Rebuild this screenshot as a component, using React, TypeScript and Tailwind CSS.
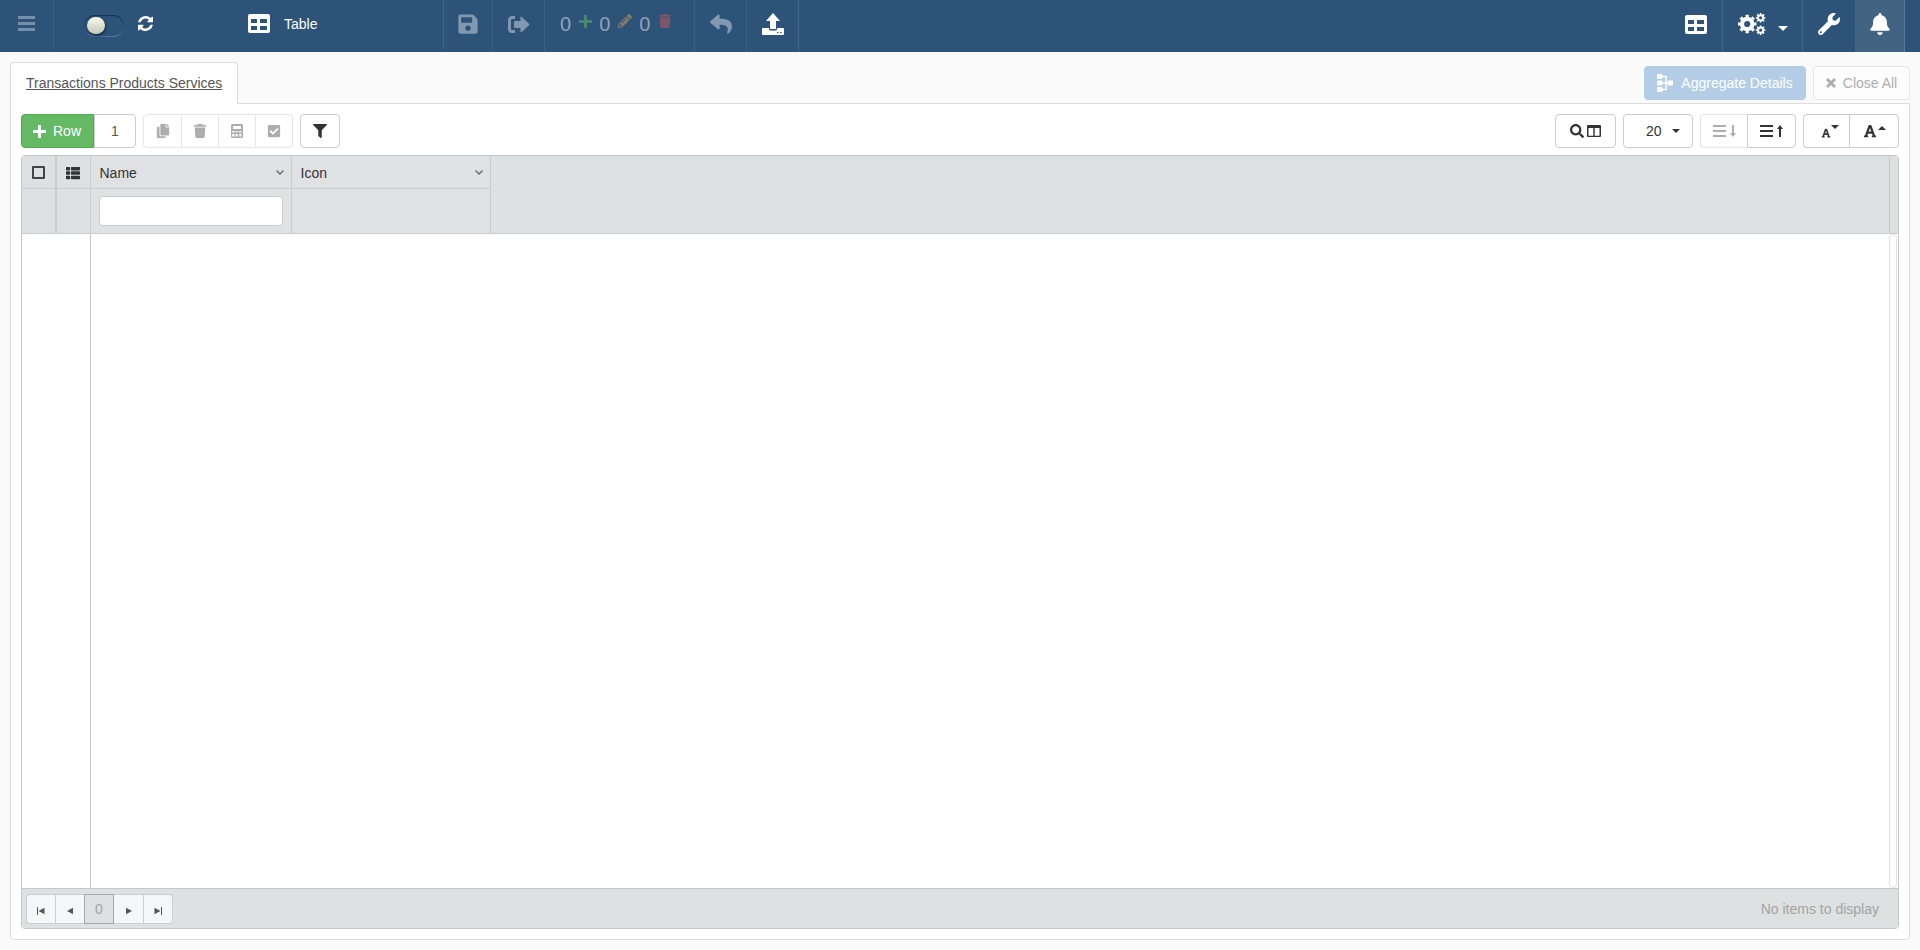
import { type ReactNode } from "react";
import {
  FaBell,
  FaCheckSquare,
  FaCopy,
  FaFilter,
  FaFont,
  FaPencilAlt,
  FaReply,
  FaSave,
  FaSearch,
  FaThList,
  FaWrench,
} from "react-icons/fa";
import { FaTrash } from "react-icons/fa6";

function TableIcon({ className }: { className?: string }) {
  return (
    <svg viewBox="0 0 22 19" className={className} fill="currentColor" aria-hidden="true">
      <path
        fillRule="evenodd"
        d="M2 0h18a2 2 0 0 1 2 2v15a2 2 0 0 1-2 2H2a2 2 0 0 1-2-2V2a2 2 0 0 1 2-2ZM3 5v4h6V5Zm9 0v4h7V5ZM3 12v4h6v-4Zm9 0v4h7v-4Z"
      />
    </svg>
  );
}

function RefreshIcon({ className }: { className?: string }) {
  return (
    <svg viewBox="0 0 1536 1536" className={className} fill="currentColor" aria-hidden="true">
      <path d="M1511 928q0 5-1 7-64 268-268 434.500T764 1536q-146 0-282.500-55T238 1324l-129 129q-19 19-45 19t-45-19-19-45V960q0-26 19-45t45-19h448q26 0 45 19t19 45-19 45l-137 137q71 66 161 102t187 36q134 0 250-65t186-179q11-17 53-117 8-23 30-23h192q13 0 22.500 9.500t9.500 22.500zm25-800v448q0 26-19 45t-45 19h-448q-26 0-45-19t-19-45 19-45l138-138Q969 256 768 256q-134 0-250 65T332 500q-11 17-53 117-8 23-30 23H50q-13 0-22.500-9.500T18 608v-7q65-268 270-434.500T768 0q146 0 284 55.500T1297 212l130-129q19-19 45-19t45 19 19 45z" />
    </svg>
  );
}

function ExitIcon({ className }: { className?: string }) {
  return (
    <svg viewBox="0 0 22 17" className={className} aria-hidden="true">
      <path d="M7 1.500H4a2.500 2.500 0 0 0-2.500 2.500v9A2.500 2.500 0 0 0 4 15.500h3" fill="none" stroke="currentColor" strokeWidth="3" />
      <path d="M13.500.8 21 7.800q.7.700 0 1.400l-7.500 7q-1 .6-1-.6V12H7.200Q6 12 6 10.800V6.200Q6 5 7.200 5h5.300V1.400q0-1.200 1-.6Z" fill="currentColor" />
    </svg>
  );
}

function UploadIcon({ className }: { className?: string }) {
  return (
    <svg viewBox="0 0 22 22" className={className} fill="currentColor" aria-hidden="true">
      <path d="M11 0 18 8h-4v7.500q0 .5-.5.500h-5q-.5 0-.5-.5V8H4Z" />
      <path
        fillRule="evenodd"
        d="M1 15h6v1q0 1.500 1.500 1.500h5q1.500 0 1.500-1.500v-1h6q1 0 1 1v5q0 1-1 1H1q-1 0-1-1v-5q0-1 1-1ZM15 19v1h1.500v-1Zm3 0v1h1.500v-1Z"
      />
    </svg>
  );
}

function Gear({ x, y, ring, width, teeth, reach }: { x: number; y: number; ring: number; width: number; teeth: number; reach: number }) {
  return (
    <g fill="none" stroke="currentColor">
      <circle cx={x} cy={y} r={ring} strokeWidth={width} />
      <circle
        cx={x}
        cy={y}
        r={ring + width / 2 + reach / 2 - 0.2}
        strokeWidth={reach + 0.4}
        pathLength={teeth * 2}
        strokeDasharray="1 1"
        strokeDashoffset="0.5"
      />
    </g>
  );
}

function GearsIcon({ className }: { className?: string }) {
  return (
    <svg viewBox="0 0 28 22" className={className} aria-hidden="true">
      <Gear x={9.2} y={11} ring={5.2} width={4.2} teeth={8} reach={2} />
      <Gear x={22.6} y={4.8} ring={2.6} width={2} teeth={8} reach={1.2} />
      <Gear x={22.6} y={17.2} ring={2.6} width={2} teeth={8} reach={1.2} />
    </svg>
  );
}

function PlusIcon({ className }: { className?: string }) {
  return (
    <svg viewBox="0 0 13 13" className={className} fill="none" stroke="currentColor" strokeWidth="3" aria-hidden="true">
      <path d="M6.500 0v13M0 6.500h13" />
    </svg>
  );
}

function CrossIcon({ className }: { className?: string }) {
  return (
    <svg viewBox="0 0 10 10" className={className} fill="none" stroke="currentColor" strokeWidth="2.800" aria-hidden="true">
      <path d="m1 1 8 8M9 1 1 9" />
    </svg>
  );
}

function HierarchyIcon({ className }: { className?: string }) {
  return (
    <svg viewBox="0 0 16 18" className={className} aria-hidden="true">
      <path d="M4 2.500h5v13H4M4 9h8" fill="none" stroke="currentColor" strokeWidth="1.500" />
      <path d="M1 0h3.500q1 0 1 1v3q0 1-1 1H1Q0 5 0 4V1q0-1 1-1Zm0 6.500h3.500q1 0 1 1v3q0 1-1 1H1q-1 0-1-1v-3q0-1 1-1ZM1 13h3.500q1 0 1 1v3q0 1-1 1H1q-1 0-1-1v-3q0-1 1-1ZM11.500 6.500H15q1 0 1 1v3q0 1-1 1h-3.500q-1 0-1-1v-3q0-1 1-1Z" fill="currentColor" />
    </svg>
  );
}

function CalculatorIcon({ className }: { className?: string }) {
  return (
    <svg viewBox="0 0 12 14" className={className} aria-hidden="true">
      <path
        fill="currentColor"
        fillRule="evenodd"
        d="M1.500 0h9A1.500 1.500 0 0 1 12 1.500v11a1.500 1.500 0 0 1-1.500 1.500h-9A1.500 1.500 0 0 1 0 12.500v-11A1.500 1.500 0 0 1 1.500 0ZM2 2v3h8V2ZM1.200 7v1.500h2.300V7Zm3.500 0v1.500h2V7Zm3.300 0v1.500h2.500V7ZM1.200 10v2.500h2.300V10Zm3.500 0v2.500h2V10Zm3.600 0v2.500h2V10Z"
      />
    </svg>
  );
}

function ColumnsIcon({ className }: { className?: string }) {
  return (
    <svg viewBox="0 0 14 12" className={className} aria-hidden="true">
      <path
        fill="currentColor"
        fillRule="evenodd"
        d="M1 0h12a1 1 0 0 1 1 1v10a1 1 0 0 1-1 1H1a1 1 0 0 1-1-1V1a1 1 0 0 1 1-1ZM1.500 3v7.700h4.800V3Zm6.200 0v7.700h4.800V3Z"
      />
    </svg>
  );
}

function LinesIcon({ className }: { className?: string }) {
  return (
    <svg viewBox="0 0 13 12" className={className} fill="none" stroke="currentColor" strokeWidth="2" aria-hidden="true">
      <path d="M0 1h13M0 6h13M0 11h13" />
    </svg>
  );
}

function ThinArrowIcon({ className }: { className?: string }) {
  return (
    <svg viewBox="0 0 6 12" className={className} fill="currentColor" aria-hidden="true">
      <path d="M3 0 6 4H4v8H2V4H0Z" />
    </svg>
  );
}

function TriangleIcon({ className }: { className?: string }) {
  return (
    <svg viewBox="0 0 8 4" className={className} fill="currentColor" aria-hidden="true">
      <path d="M0 0h8L4 4Z" />
    </svg>
  );
}

function Chevron() {
  return (
    <svg viewBox="0 0 8 5" className="h-[5px] w-2" fill="none" stroke="#666" strokeWidth="1.300" aria-hidden="true">
      <path d="m.5.500 3.500 3.500L7.500.500" />
    </svg>
  );
}

function BarButton({ label, className, children }: { label: string; className: string; children: ReactNode }) {
  return (
    <button type="button" aria-label={label} className={`flex h-[52px] shrink-0 items-center justify-center pb-1 ${className}`}>
      {children}
    </button>
  );
}

function TopBar() {
  return (
    <header className="flex h-[52px] items-start bg-[#2d5378] pr-[15px] text-white">
      <button type="button" aria-label="Menu" className="flex h-[49px] w-[54px] shrink-0 items-center justify-center border-r border-[#3a5f85] pb-[2px] text-[#7790aa]">
        <svg viewBox="0 0 17 15" className="h-[15px] w-[17px]" fill="none" stroke="currentColor" strokeWidth="3" aria-hidden="true">
          <path d="M0 1.500h17M0 7.500h17M0 13.500h17" />
        </svg>
      </button>
      <div className="flex h-[49px] w-[390px] shrink-0 items-center border-r border-[#43658a] pb-2 pl-[30px]">
        <button
          type="button"
          role="switch"
          aria-checked="false"
          aria-label="Auto refresh"
          className="mt-[10px] flex h-[22px] w-10 items-center rounded-full border-b border-[#54759a] pl-[3px] shadow-[inset_0_1px_1px_#152f4b]"
        >
          <span className="h-[17px] w-[18px] rounded-full bg-linear-to-b from-[#f8f8ec] to-[#c5cab8] shadow-[1px_2px_3px_#17314c]" />
        </button>
        <button type="button" aria-label="Refresh" className="ml-[14px] mt-[6px]">
          <RefreshIcon className="size-[15px]" />
        </button>
        <div className="ml-[95px] mt-[6px] flex items-center gap-[14px]">
          <TableIcon className="h-[19px] w-[22px]" />
          <h1 className="text-sm">Table</h1>
        </div>
      </div>
      <BarButton label="Save" className="w-[49px] border-r border-[#3a5f85] text-[#8198b0]">
        <FaSave className="size-[22px]" />
      </BarButton>
      <BarButton label="Save and exit" className="w-[52px] border-r border-[#3a5f85] text-[#8198b0]">
        <ExitIcon className="h-[17px] w-[22px]" />
      </BarButton>
      <div className="flex h-[52px] w-[150px] shrink-0 items-center border-r border-[#3a5f85] pb-1 pl-[15px] text-xl text-[#8ea3b8]">
        <span>0</span>
        <PlusIcon className="mb-[6px] ml-2 size-[13px] text-[#468670]" />
        <span className="ml-[7px]">0</span>
        <FaPencilAlt className="mb-[6px] ml-2 size-[14px] text-[#857a66]" />
        <span className="ml-[7px]">0</span>
        <FaTrash className="mb-[6px] ml-2 size-[14px] text-[#7d5468]" />
      </div>
      <BarButton label="Undo" className="w-[52px] border-r border-[#3a5f85] text-[#8198b0]">
        <FaReply className="size-[22px]" />
      </BarButton>
      <BarButton label="Upload" className="w-[52px] border-r border-[#43658a]">
        <UploadIcon className="size-[22px]" />
      </BarButton>
      <div className="flex-1" />
      <BarButton label="Tables" className="w-[53px] border-r border-[#43658a]">
        <TableIcon className="h-[19px] w-[22px]" />
      </BarButton>
      <BarButton label="Settings" className="w-20 gap-3 border-r border-[#43658a]">
        <GearsIcon className="h-[22px] w-7" />
        <TriangleIcon className="mt-2 h-[5px] w-[10px]" />
      </BarButton>
      <BarButton label="Tools" className="w-[52px]">
        <FaWrench className="size-[22px]" />
      </BarButton>
      <BarButton label="Notifications" className="w-[50px] border-r border-[#5b7a98] bg-[#436383]">
        <FaBell className="size-[22px]" />
      </BarButton>
    </header>
  );
}

const control = "flex h-[34px] items-center justify-center border";

function Toolbar() {
  return (
    <div className="flex justify-between">
      <div className="flex gap-[7px]">
        <div className="flex">
          <button type="button" className={`${control} w-[73px] gap-[7px] rounded-l border-[#4cae4c] bg-[#65b965] pr-px text-white`}>
            <PlusIcon className="size-[13px]" />
            Row
          </button>
          <input
            type="text"
            aria-label="Number of rows"
            defaultValue="1"
            className="h-[34px] w-[42px] rounded-r border border-[#ccc] bg-white text-center text-[#555] outline-none"
          />
        </div>
        <div className="flex text-[#adadad]">
          <button type="button" aria-label="Copy" disabled className={`${control} w-[39px] rounded-l border-[#e6e6e6]`}>
            <FaCopy className="size-[14px]" />
          </button>
          <button type="button" aria-label="Delete" disabled className={`${control} w-[37px] border-l-0 border-[#e6e6e6]`}>
            <FaTrash className="size-[14px]" />
          </button>
          <button type="button" aria-label="Calculate" disabled className={`${control} w-[37px] border-l-0 border-[#e6e6e6]`}>
            <CalculatorIcon className="h-[14px] w-3" />
          </button>
          <button type="button" aria-label="Validate" disabled className={`${control} w-[37px] rounded-r border-l-0 border-[#e6e6e6]`}>
            <FaCheckSquare className="size-[14px]" />
          </button>
        </div>
        <button type="button" aria-label="Filter" className={`${control} w-10 rounded border-[#ccc]`}>
          <FaFilter className="size-[14px]" />
        </button>
      </div>
      <div className="flex gap-[7px]">
        <button type="button" aria-label="Find column" className={`${control} w-[61px] gap-[3px] rounded border-[#ccc]`}>
          <FaSearch className="size-[14px]" />
          <ColumnsIcon className="h-3 w-[14px]" />
        </button>
        <div className="relative flex items-center">
          <select aria-label="Page size" defaultValue="20" className="h-[34px] w-[70px] appearance-none rounded border border-[#ccc] bg-white pl-[22px] outline-none">
            <option>20</option>
            <option>50</option>
            <option>100</option>
          </select>
          <TriangleIcon className="pointer-events-none absolute right-[13px] h-1 w-2" />
        </div>
        <div className="flex">
          <button type="button" aria-label="Collapse rows" disabled className={`${control} w-[47px] gap-1 rounded-l border-r-0 border-[#e6e6e6] text-[#adadad]`}>
            <LinesIcon className="h-3 w-[13px]" />
            <ThinArrowIcon className="h-3 w-[6px] rotate-180" />
          </button>
          <button type="button" aria-label="Expand rows" className={`${control} w-[49px] gap-1 rounded-r border-[#ccc]`}>
            <LinesIcon className="h-3 w-[13px]" />
            <ThinArrowIcon className="h-3 w-[6px]" />
          </button>
        </div>
        <div className="flex">
          <button type="button" aria-label="Smaller text" className={`${control} w-[46px] rounded-l border-r-0 border-[#ccc] pl-[6px]`}>
            <FaFont className="mt-1 size-[10px]" />
            <TriangleIcon className="mb-2 h-1 w-2" />
          </button>
          <button type="button" aria-label="Larger text" className={`${control} w-[50px] gap-px rounded-r border-[#ccc]`}>
            <FaFont className="size-[14px]" />
            <TriangleIcon className="mb-[6px] h-1 w-2 rotate-180" />
          </button>
        </div>
      </div>
    </div>
  );
}

const pagerButton = "flex h-[30px] items-center justify-center border border-[#ccced0] bg-[#f5f6f8]";

function Grid() {
  return (
    <section className="mt-[7px] flex flex-1 flex-col overflow-hidden rounded border border-[#c5c8c8]">
      <div className="flex bg-[#dde1e2]">
        <table className="table-fixed border-collapse text-left">
          <colgroup>
            <col className="w-[34px]" />
            <col className="w-[34px]" />
            <col className="w-[201px]" />
            <col className="w-[199px]" />
          </colgroup>
          <thead>
            <tr className="h-8 border-b border-[#c9cccc]">
              <th className="border-r-2 border-[#c9cccc] p-0">
                <input type="checkbox" aria-label="Select all" className="mx-auto mt-[2px] block size-[13px] appearance-none rounded-[1px] border-2 border-[#444] bg-transparent" />
              </th>
              <th className="border-r border-[#c9cccc] p-0">
                <FaThList className="mx-auto mt-[2px] size-[14px]" />
              </th>
              {["Name", "Icon"].map((name) => (
                <th key={name} scope="col" className="border-r border-[#c9cccc] bg-[#e0e1e3] p-0 font-normal">
                  <div className="flex items-center justify-between pl-[9px] pr-[7px] pt-[2px]">
                    {name}
                    <Chevron />
                  </div>
                </th>
              ))}
            </tr>
            <tr className="h-[45px] border-b border-[#c9cccc]">
              <td className="border-r-2 border-[#c9cccc]" />
              <td className="border-r border-[#c9cccc]" />
              <td className="border-r border-[#c9cccc] bg-[#e0e1e3] px-2 py-0">
                <input type="text" aria-label="Filter by name" className="block h-[30px] w-full rounded border border-[#ccc] bg-white px-2 outline-none" />
              </td>
              <td className="border-r border-[#c9cccc] bg-[#e0e1e3]" />
            </tr>
          </thead>
        </table>
        <div className="flex-1 border-b border-[#c9cccc]" />
        <div className="w-[9px] border-b border-l border-[#c9cccc]" />
      </div>
      <div className="flex flex-1">
        <div className="w-[69px] border-r border-[#c5c8c8]" />
        <div className="flex-1" />
        <div className="mr-px w-2 rounded border border-[#e2e2e2]" />
      </div>
      <footer className="flex h-10 items-center justify-between border-t border-[#c5c8c8] bg-[#dde1e2] pl-1 pr-[19px]">
        <nav aria-label="Pages" className="flex text-[#555]">
          <button type="button" aria-label="First page" className={`${pagerButton} w-[29px] rounded-l border-r-0`}>
            <svg viewBox="0 0 8 8" className="mt-1 size-2" fill="currentColor" aria-hidden="true">
              <path d="M0 0h1v8H0ZM7.500.700v6.600L1.500 4Z" />
            </svg>
          </button>
          <button type="button" aria-label="Previous page" className={`${pagerButton} w-[29px] border-r-0`}>
            <svg viewBox="0 0 8 8" className="mt-1 size-2" fill="currentColor" aria-hidden="true">
              <path d="M7 .7v6.600L1 4Z" />
            </svg>
          </button>
          <button type="button" aria-current="page" className="h-[30px] w-[30px] border border-[#a5a8a9] bg-[#dde1e2] text-[#a3a3a3]">
            0
          </button>
          <button type="button" aria-label="Next page" className={`${pagerButton} w-[30px] border-l-0`}>
            <svg viewBox="0 0 8 8" className="mt-1 size-2" fill="currentColor" aria-hidden="true">
              <path d="M1 .7v6.600L7 4Z" />
            </svg>
          </button>
          <button type="button" aria-label="Last page" className={`${pagerButton} w-[29px] rounded-r border-l-0`}>
            <svg viewBox="0 0 8 8" className="mt-1 size-2" fill="currentColor" aria-hidden="true">
              <path d="M7 0h1v8H7ZM.5.700v6.600l6-3.300Z" />
            </svg>
          </button>
        </nav>
        <p className="text-[#a3a3a3]">No items to display</p>
      </footer>
    </section>
  );
}

export default function App() {
  return (
    <div className="flex min-h-screen flex-col bg-[#fafafa] font-['Liberation_Sans',Arial,sans-serif] text-sm leading-5 text-[#333]">
      <TopBar />
      <main className="flex flex-1 flex-col p-[10px]">
        <div className="flex items-end justify-between">
          <a href="#transactions" className="z-10 -mb-px flex h-[42px] items-center rounded-t border border-b-0 border-[#ddd] bg-white px-[15px] pb-[2px] text-[#555] underline">
            Transactions Products Services
          </a>
          <div className="mb-[3px] flex gap-[7px]">
            <button type="button" disabled className="flex h-[34px] w-[162px] items-center justify-center gap-2 rounded border border-[#aecae4] bg-[#b3cde6] text-white">
              <HierarchyIcon className="h-[18px] w-4" />
              Aggregate Details
            </button>
            <button type="button" disabled className="flex h-[34px] w-[97px] items-center justify-center gap-[7px] rounded border border-[#e6e6e6] bg-[#fdfdfd] text-[#adadad]">
              <CrossIcon className="size-[10px]" />
              Close All
            </button>
          </div>
        </div>
        <div className="flex flex-1 flex-col rounded-b border border-[#ddd] bg-white p-[10px]">
          <Toolbar />
          <Grid />
        </div>
      </main>
    </div>
  );
}
